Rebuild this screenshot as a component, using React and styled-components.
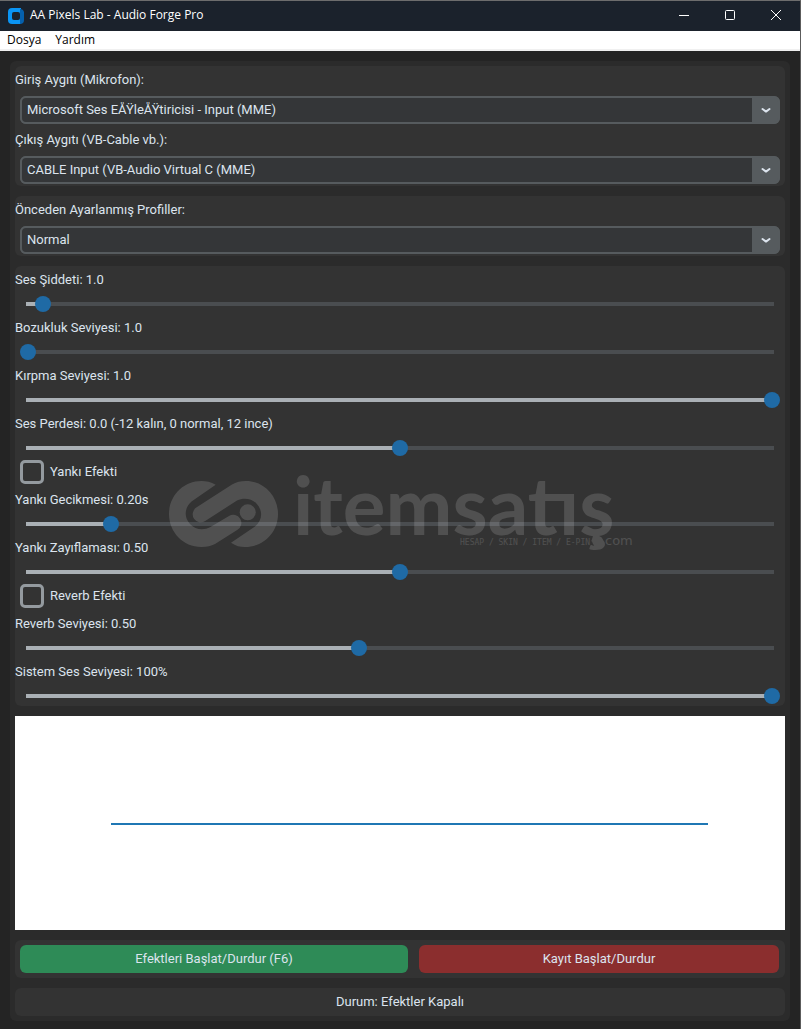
import React, { useState } from "react";
import styled, { createGlobalStyle } from "styled-components";

const T = {
  title: "#1b222c", body: "#242424", frame: "#2b2b2b", card: "#333333",
  field: "#343638", edge: "#565b5e", text: "#dce4ee",
  blue: "#1f6aa5", fill: "#aab0b5", track: "#4a4d50",
  green: "#2e8b57", red: "#8b2e2e",
};

const GlobalStyle = createGlobalStyle`
  * { box-sizing: border-box; }
  body { margin: 0; background: ${T.body}; }
  button, input, select { font: inherit; margin: 0; }
`;

const Window = styled.div`
  position: relative;
  min-height: 100vh;
  display: flex; flex-direction: column;
  background: ${T.body};
  border-top: 1px solid #6d6d6d;
  border-right: 1px solid #5c5c5c;
  color: ${T.text};
  font-family: Roboto, "Liberation Sans", sans-serif;
  font-size: 13px;
`;

const TitleBar = styled.header`
  display: flex; align-items: center;
  height: 30px; padding: 0 1px 0 8px;
  background: ${T.title}; color: #ffffff;
`;

const Title = styled.h1`
  flex: 1; margin: 0 0 0 6px;
  font-family: "Open Sans", "Noto Sans", sans-serif;
  font-size: 12px; font-weight: 400; line-height: 28px;
  padding-bottom: 2px;
`;

const WindowButton = styled.button`
  width: 46px; height: 30px; padding: 0 0 2px;
  display: flex; align-items: center; justify-content: center;
  background: none; border: none; color: #ffffff;
  &:hover { background: #2c3541; }
`;

const MenuBar = styled.nav`
  display: flex; gap: 14px;
  height: 20px; padding: 0 7px;
  background: #ffffff; border-bottom: 2px solid #f0f0f0;
`;

const MenuItem = styled.button`
  padding: 0; background: none; border: none; color: #000000;
  font-family: "Open Sans", "Noto Sans", sans-serif;
  font-size: 12px; line-height: 18px;
`;

const Main = styled.main`
  display: flex; flex-direction: column; gap: 10px;
  margin: 10px 10px 8px; padding: 5px;
  background: ${T.frame}; border-radius: 6px;
`;

const Card = styled.section`
  background: ${T.card}; border-radius: 6px;
`;

const Label = styled.label`
  display: block;
  line-height: 28px;
`;

const SelectBox = styled.div`
  display: grid; grid-template-columns: 1fr 28px;
  height: 28px; margin: 2px 5px;
  background: ${T.edge}; border-radius: 6px;
  select {
    grid-area: 1 / 1 / 2 / 3;
    appearance: none; width: 100%; height: 28px;
    padding: 0 28px 2px 5px;
    border: 2px solid ${T.edge}; border-radius: 6px;
    background: linear-gradient(${T.edge}, ${T.edge}) right / 26px 100% no-repeat ${T.field};
    color: ${T.text};
  }
  svg { grid-area: 1 / 2; place-self: center; pointer-events: none; z-index: 1; }
`;

const Range = styled.input`
  appearance: none; display: block;
  width: calc(100% - 10px); height: 20px; margin: 0 5px;
  background:
    linear-gradient(to right, ${T.fill} var(--fill), ${T.track} var(--fill))
    center / calc(100% - 12px) 4px no-repeat;
  &::-webkit-slider-thumb {
    appearance: none;
    width: 16px; height: 16px;
    border-radius: 50%; background: ${T.blue};
  }
`;

const CheckLabel = styled.label`
  display: flex; align-items: center; gap: 6px;
  height: 28px; padding-left: 5px;
  span { padding-bottom: 2px; }
`;

const Check = styled.input`
  appearance: none;
  width: 24px; height: 24px;
  border: 3px solid #949a9f; border-radius: 5px;
  &:checked { background: ${T.blue}; border-color: ${T.blue}; }
`;

const Plot = styled.svg`
  display: block; width: 100%; height: 214px;
  background: #ffffff;
`;

const Actions = styled(Card)`
  display: flex; gap: 11px; padding: 5px 6px 5px 5px;
`;

const ActionButton = styled.button`
  flex: ${props => props.$grow} 1 0;
  height: 28px; padding: 0 0 2px;
  border: none; border-radius: 6px;
  background: ${props => props.$color}; color: ${T.text};
`;

const Status = styled(Card)`
  line-height: 28px; text-align: center;
`;

const Mark = styled.svg`
  position: absolute; inset: 0; margin: auto;
  width: 464px; height: 68px;
  fill: #ffffff; opacity: 0.14;
  pointer-events: none; overflow: visible;
`;

const DEVICES_IN = ["Microsoft Ses EÅŸleÅŸtiricisi - Input (MME)"];
const DEVICES_OUT = ["CABLE Input (VB-Audio Virtual C (MME)"];
const PROFILES = ["Normal", "Robot", "Derin", "İnce"];

const fixed = (n) => (v) => v.toFixed(n);

const Logo = () => (
  <svg width="16" height="16" viewBox="0 0 16 16" aria-hidden="true">
    <path d="M4 0h9v16H4a4 4 0 0 1-4-4V4a4 4 0 0 1 4-4z" fill="#0a95f5" />
    <path d="M12 1a4 4 0 0 1 4 3v8a4 4 0 0 1-4 4z" fill="#0560ad" />
    <rect x="4" y="4" width="8" height="8" rx="2" fill={T.title} />
  </svg>
);

const Dropdown = ({ id, label, options }) => (
  <>
    <Label htmlFor={id}>{label}</Label>
    <SelectBox>
      <select id={id}>
        {options.map(o => <option key={o}>{o}</option>)}
      </select>
      <svg width="10" height="6" viewBox="0 0 10 6" fill="none" stroke={T.text} strokeWidth="2" strokeLinecap="round" strokeLinejoin="round">
        <path d="M1.5 2L5 4.6 8.5 2" />
      </svg>
    </SelectBox>
  </>
);

const Slider = ({ id, label, start, min, max, step, format, suffix = "" }) => {
  const [value, setValue] = useState(start);
  const fill = ((value - min) / (max - min)) * 100;
  return (
    <>
      <Label htmlFor={id}>{label}: {format(value)}{suffix}</Label>
      <Range
        id={id} type="range" min={min} max={max} step={step} value={value}
        style={{ "--fill": `${fill}%` }}
        onChange={e => setValue(Number(e.target.value))}
      />
    </>
  );
};

const Watermark = () => (
  <Mark viewBox="-1 -1 464 68" aria-hidden="true">
    <path d="M46.7 2.7C42 0 37-1 32.5-1C14-1 0 14 0 32C0 50 14 65 32.5 65C38 65 42 64 46 62L68.5 47.8A8 8 0 0 0 60 34L41 45.3C35 48.5 26 48 21 42C15 36 15 26 22.5 19.5Z" />
    <path d="M62 60.7C67 64 71 65 76 65C95 65 109 50 109 32C109 14 95-1 77-1C72-1 67 0 63 2.5L27.3 25.6A8 8 0 0 0 36.2 39L68 18.5C74 15.5 82 16 87 21C94 28 94 38 86 44.5Z" />
    <circle cx="78.7" cy="30.3" r="8" />
    <text x="124" y="53" fontFamily="Lato" fontWeight="700" fontSize="80">itemsatış</text>
    <text x="291" y="63" fontFamily="DejaVu Sans Mono" fontSize="8">HESAP / SKIN / ITEM / E-PIN</text>
    <circle cx="428.7" cy="59.3" r="5.5" />
    <text x="436" y="63" fontFamily="DejaVu Sans" fontSize="13">com</text>
  </Mark>
);

const App = () => {
  const [running, setRunning] = useState(false);

  return (
    <Window>
      <GlobalStyle />
      <TitleBar>
        <Logo />
        <Title>AA Pixels Lab - Audio Forge Pro</Title>
        <WindowButton aria-label="Küçült">
          <svg width="10" height="10"><path d="M0 5.5h10" stroke="currentColor" /></svg>
        </WindowButton>
        <WindowButton aria-label="Büyüt">
          <svg width="10" height="10"><rect x=".5" y=".5" width="9" height="9" rx="1" fill="none" stroke="currentColor" /></svg>
        </WindowButton>
        <WindowButton aria-label="Kapat">
          <svg width="10" height="10"><path d="M0 0l10 10M10 0L0 10" stroke="currentColor" /></svg>
        </WindowButton>
      </TitleBar>
      <MenuBar>
        <MenuItem>Dosya</MenuItem>
        <MenuItem>Yardım</MenuItem>
      </MenuBar>

      <Main>
        {/* Devices */}
        <Card>
          <Dropdown id="input" label="Giriş Aygıtı (Mikrofon):" options={DEVICES_IN} />
          <Dropdown id="output" label="Çıkış Aygıtı (VB-Cable vb.):" options={DEVICES_OUT} />
        </Card>

        <Card>
          <Dropdown id="profile" label="Önceden Ayarlanmış Profiller:" options={PROFILES} />
        </Card>

        {/* Effects */}
        <Card>
          <Slider id="gain" label="Ses Şiddeti" start={1} min={0} max={50} step={0.1} format={fixed(1)} />
          <Slider id="distortion" label="Bozukluk Seviyesi" start={1} min={1} max={50} step={0.1} format={fixed(1)} />
          <Slider id="clip" label="Kırpma Seviyesi" start={1} min={0} max={1} step={0.1} format={fixed(1)} />
          <Slider id="pitch" label="Ses Perdesi" start={0} min={-12} max={12} step={0.5} format={fixed(1)} suffix=" (-12 kalın, 0 normal, 12 ince)" />
          <CheckLabel><Check type="checkbox" /><span>Yankı Efekti</span></CheckLabel>
          <Slider id="delay" label="Yankı Gecikmesi" start={0.2} min={0.1} max={1} step={0.01} format={fixed(2)} suffix="s" />
          <Slider id="decay" label="Yankı Zayıflaması" start={0.5} min={0} max={1} step={0.01} format={fixed(2)} />
          <CheckLabel><Check type="checkbox" /><span>Reverb Efekti</span></CheckLabel>
          <Slider id="reverb" label="Reverb Seviyesi" start={0.5} min={0.1} max={1} step={0.01} format={fixed(2)} />
          <Slider id="volume" label="Sistem Ses Seviyesi" start={100} min={0} max={100} step={1} format={fixed(0)} suffix="%" />
        </Card>

        <Plot viewBox="0 0 770 214" preserveAspectRatio="none">
          <path d="M96 108H693" stroke="#1f77b4" strokeWidth="2" />
        </Plot>

        <Actions>
          <ActionButton $grow={388} $color={T.green} onClick={() => setRunning(r => !r)}>
            Efektleri Başlat/Durdur (F6)
          </ActionButton>
          <ActionButton $grow={360} $color={T.red}>Kayıt Başlat/Durdur</ActionButton>
        </Actions>

        <Status role="status">Durum: Efektler {running ? "Açık" : "Kapalı"}</Status>
      </Main>

      <Watermark />
    </Window>
  );
};

export default App;
